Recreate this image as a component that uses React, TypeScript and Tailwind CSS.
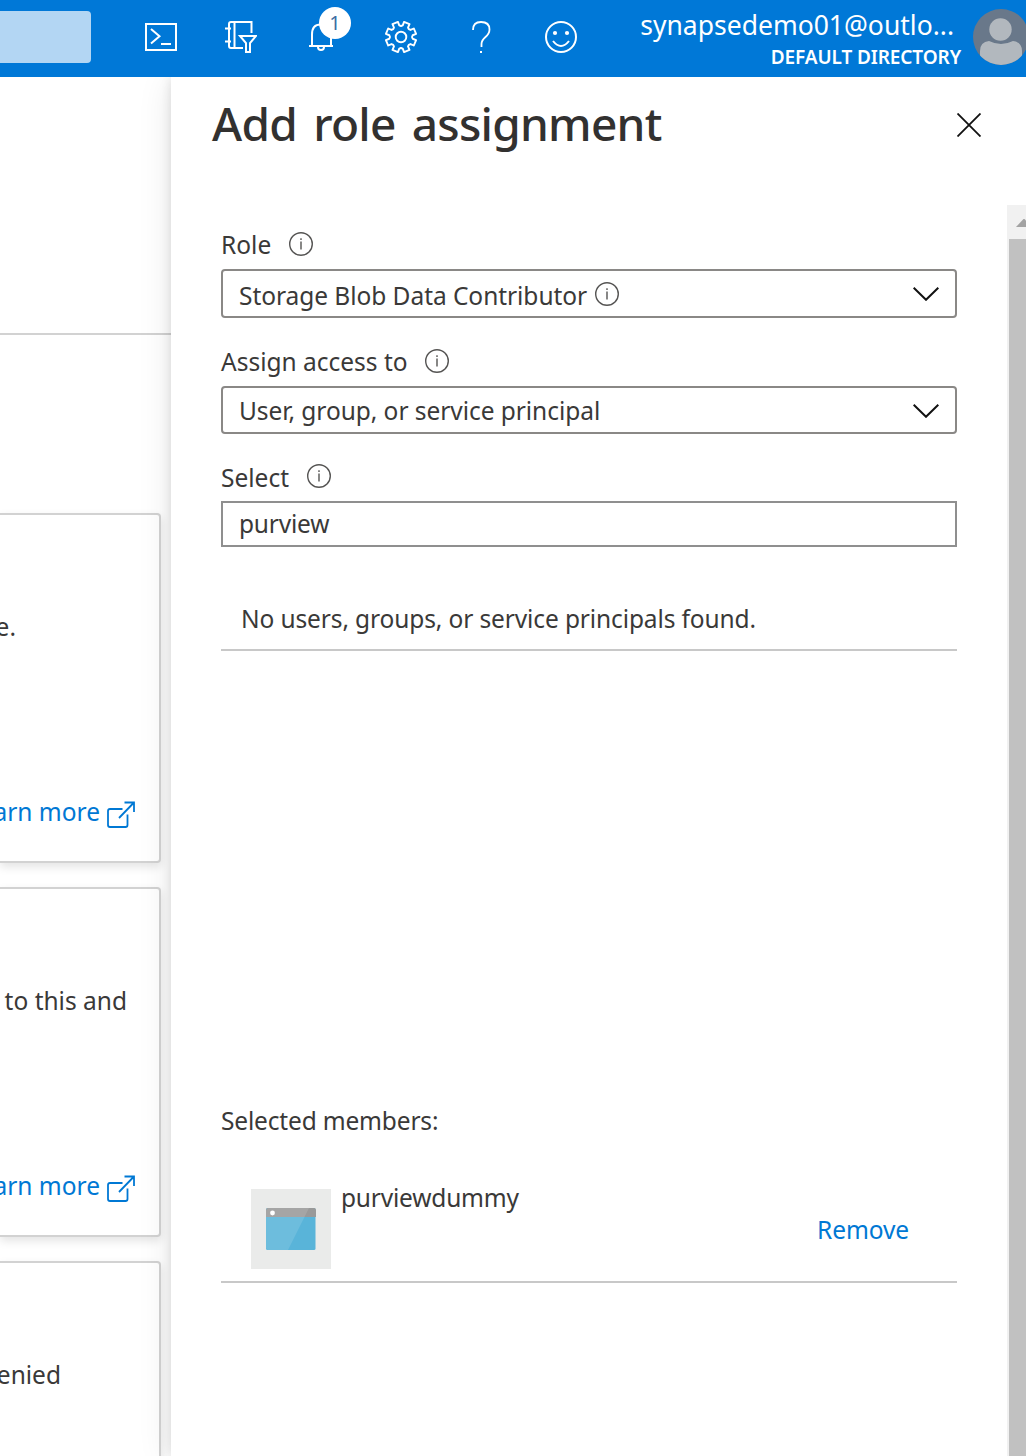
import type { ReactNode } from "react";

function HeaderIcon({ children }: { children: ReactNode }) {
  return (
    <svg width="32" height="32" viewBox="0 0 32 32" fill="none" stroke="white" strokeWidth="2" className="shrink-0">
      {children}
    </svg>
  );
}

function gearPath() {
  const teeth = 8;
  const point = (radius: number, degrees: number) => {
    const a = (degrees * Math.PI) / 180;
    return `${(16 + radius * Math.cos(a)).toFixed(2)} ${(16 + radius * Math.sin(a)).toFixed(2)}`;
  };
  const points: string[] = [];
  for (let i = 0; i < teeth; i++) {
    const c = i * 45 + 22.5;
    points.push(point(11.8, c - 14), point(15.4, c - 11), point(15.4, c + 11), point(11.8, c + 14), point(11, c + 22.5));
  }
  return `M${points.join("L")}Z`;
}

function InfoIcon({ className = "" }: { className?: string }) {
  return (
    <svg width="24" height="24" viewBox="0 0 24 24" fill="none" stroke="#555453" className={`shrink-0 ${className}`}>
      <circle cx="12" cy="12" r="11.3" strokeWidth="1.4" />
      <path d="M12 9.5V17.5M12 6.2V8" strokeWidth="1.4" />
    </svg>
  );
}

function Chevron({ className = "" }: { className?: string }) {
  return (
    <svg width="26" height="14" viewBox="0 0 26 14" fill="none" stroke="#111" strokeWidth="2" className={`mr-4 ml-auto ${className}`}>
      <path d="M0.7 0.8L13 12.8L25.3 0.8" />
    </svg>
  );
}

function LearnMore() {
  return (
    <div className="flex h-[34px] items-center justify-end pr-[24px] text-[#0078d4]">
      <span>arn more</span>
      <svg width="28" height="28" viewBox="0 0 28 28" fill="none" stroke="currentColor" strokeWidth="1.8" className="mt-[6px] ml-[7px] shrink-0">
        <path d="M15.5 8H3Q1 8 1 10V24Q1 26 3 26H18.500Q20.500 26 20.500 24V13.500" />
        <path d="M12 17L26.500 2M17.500 1.500H27V11" />
      </svg>
    </div>
  );
}

function Card({ text, pad }: { text: string; pad: string }) {
  return (
    <div className="h-[350px] w-[161px] shrink-0 overflow-hidden rounded-r-[4px] border-2 border-l-0 border-[#d2d2d2] bg-white pt-[95px] shadow-[0_4px_10px_rgba(0,0,0,0.11)]">
      <div className={`flex h-[34px] items-center justify-end ${pad}`}>{text}</div>
      <div className="h-[151px]" />
      <LearnMore />
    </div>
  );
}

export default function App() {
  return (
    <div className="flex h-[1456px] w-[1026px] flex-col overflow-hidden bg-white font-['Noto_Sans',sans-serif] text-[24.5px] leading-[34px] whitespace-nowrap text-[#3a3938]">
      <header className="flex h-[77px] shrink-0 overflow-hidden bg-[#0078d7] text-white">
        <div className="mt-[11px] h-[52px] w-[91px] shrink-0 rounded-r-[4px] bg-[#b3d6f3]" />
        <div className="ml-[54px] flex h-[74px] shrink-0 items-center gap-12">
          <HeaderIcon>
            <path d="M1 3H31V29H1ZM16 23H26" />
            <path d="M6 8L14.500 15.300L6 22.500" />
          </HeaderIcon>
          <HeaderIcon>
            <path d="M26.500 12V1H6Q4 1 4 3V25Q4 27 6 27H18M9.500 1V27M0 7.500H6M0 20.500H6" strokeWidth="2" />
            <path d="M15 15H31L25 22V31H21V22Z" />
          </HeaderIcon>
          <div className="relative h-8 w-8">
            <HeaderIcon>
              <path d="M7 25V13.500Q7 3.500 15.500 3.500Q26 3.500 26 13.500V25M4 25H28" />
              <path d="M13 26Q13 29 16 29Q19 29 19 26" />
            </HeaderIcon>
            <span className="absolute -top-[14px] left-[14px] flex h-8 w-8 items-center justify-center rounded-full bg-white text-[20px] text-[#3c6da3]">1</span>
          </div>
          <HeaderIcon>
            <path d={gearPath()} strokeWidth="1.9" strokeLinejoin="round" />
            <circle cx="16" cy="16" r="5.300" strokeWidth="1.9" />
          </HeaderIcon>
          <HeaderIcon>
            <path d="M8 9Q8 1 16 1Q24.500 1 24.500 8.500Q24.500 12.500 20.500 16Q16.500 19.500 16.500 23V26" strokeWidth="1.8" />
            <path d="M16 30V32" />
          </HeaderIcon>
          <HeaderIcon>
            <circle cx="16" cy="16" r="15" />
            <g fill="white" stroke="none">
              <circle cx="10" cy="12" r="2.100" />
              <circle cx="22" cy="12" r="2.100" />
            </g>
            <path d="M8 20Q16 30 24 20" />
          </HeaderIcon>
        </div>
        <div className="ml-auto flex shrink-0 flex-col items-end pt-[8px]">
          <div className="mr-[7px] text-[26.500px] leading-[35px]">synapsedemo01@outlo...</div>
          <div className="text-[19px] leading-[28px] font-semibold tracking-[-0.1px]">DEFAULT DIRECTORY</div>
        </div>
        <svg width="53" height="56" viewBox="0 0 53 56" className="mt-[9px] ml-3 shrink-0">
          <clipPath id="avatar">
            <circle cx="28" cy="28" r="28" />
          </clipPath>
          <g clipPath="url(#avatar)">
            <rect width="56" height="56" fill="#69788a" />
            <path d="M7 56V42Q7 33 16 32Q28 38 40 32Q49 33 49 42V56Z" fill="#b2b8be" />
            <circle cx="27.500" cy="21" r="12.500" fill="#69788a" />
            <circle cx="27.500" cy="20.500" r="11.200" fill="#b2b8be" />
          </g>
        </svg>
      </header>

      <div className="flex min-h-0 flex-1">
        <main className="flex w-[171px] shrink-0 flex-col gap-6 overflow-hidden">
          <div className="mb-[154px] h-[258px] shrink-0 border-b-2 border-[#d2d2d2]" />
          <Card text="e." pad="pr-[143px]" />
          <Card text="to this and" pad="pr-[32px]" />
          <Card text="enied" pad="pr-[98px]" />
        </main>

        <aside className="z-10 flex min-w-0 flex-1 flex-col bg-white shadow-[0_4px_32px_rgba(0,0,0,0.10),0_0_10px_rgba(0,0,0,0.11)] [clip-path:inset(0_0_0_-60px)]">
          <div className="mb-9 flex h-[92px] shrink-0 items-center pr-[45px] pl-[41px]">
            <h1 className="text-[46px] leading-[60px] font-medium tracking-[-0.75px] text-[#323130] [word-spacing:5px]">Add role assignment</h1>
            <svg width="24" height="24" viewBox="0 0 24 24" stroke="#111" strokeWidth="1.8" className="mt-1 ml-auto">
              <path d="M0.500 0.500L23.500 23.500M23.500 0.500L0.500 23.500" />
            </svg>
          </div>

          <div className="flex min-h-0 flex-1">
            <div className="flex-1 px-[50px] pt-6">
              <div className="flex h-[30px] items-center">
                <span className="w-[50px] pt-[2px]">Role</span>
                <InfoIcon className="ml-[18px]" />
              </div>
              <div className="mt-[10px] flex h-[49px] items-center rounded-[4px] border-2 border-[#8a8886] pl-4">
                <span className="w-[348px] pt-[5px] tracking-[-0.05px]">Storage Blob Data Contributor</span>
                <InfoIcon className="ml-2" />
                <Chevron />
              </div>

              <div className="mt-7 flex h-[30px] items-center">
                <span className="w-[186px] pt-[2px]">Assign access to</span>
                <InfoIcon className="ml-[18px]" />
              </div>
              <div className="mt-[10px] flex h-[48px] items-center rounded-[4px] border-2 border-[#8a8886] pl-4">
                <span className="pt-[2px] tracking-[-0.05px]">User, group, or service principal</span>
                <Chevron className="mt-[2px]" />
              </div>

              <div className="mt-7 flex h-[30px] items-center">
                <span className="w-[68px] pt-[2px]">Select</span>
                <InfoIcon className="mb-[2px] ml-[18px]" />
              </div>
              <div className="mt-[9px] flex h-[46px] items-center border-2 border-[#8f8f8f] pl-4">
                <span className="tracking-[-0.2px]">purview</span>
              </div>

              <div className="mt-[55px] h-[49px] border-b-2 border-[#c8c8c8] pl-5 tracking-[-0.12px]">No users, groups, or service principals found.</div>

              <div className="mt-[453px] tracking-[-0.17px]">Selected members:</div>
              <div className="mt-[43px] flex h-[102px] items-start border-b-2 border-[#c8c8c8] pl-[30px]">
                <div className="mt-2 flex h-20 w-20 shrink-0 items-center justify-center bg-[#eaebea]">
                  <svg width="50" height="42" viewBox="0 0 50 42">
                    <rect width="49.500" height="42" rx="1.500" fill="#59b4d9" />
                    <path d="M0 9V2Q0 0 2 0H48Q50 0 50 2V9Z" fill="#999999" />
                    <path d="M2 0H43L22 42H2Q0 42 0 40V2Q0 0 2 0Z" fill="white" opacity="0.12" />
                    <circle cx="6.500" cy="5" r="2.400" fill="white" />
                  </svg>
                </div>
                <span className="ml-[10px] tracking-[-0.2px]">purviewdummy</span>
                <span className="mt-8 mr-12 ml-auto tracking-[-0.1px] text-[#0078d4]">Remove</span>
              </div>
            </div>

            <div className="flex w-[19px] shrink-0 flex-col bg-[#f1f1f1]">
              <div className="flex h-[34px] items-center justify-end pt-[2px]">
                <svg width="10" height="8" viewBox="0 0 10 8" fill="#a3a3a3">
                  <path d="M0 8L7.500 0H8.500L10 1.500V8Z" />
                </svg>
              </div>
              <div className="ml-[2px] flex-1 bg-[#c1c1c1]" />
            </div>
          </div>
        </aside>
      </div>
    </div>
  );
}
